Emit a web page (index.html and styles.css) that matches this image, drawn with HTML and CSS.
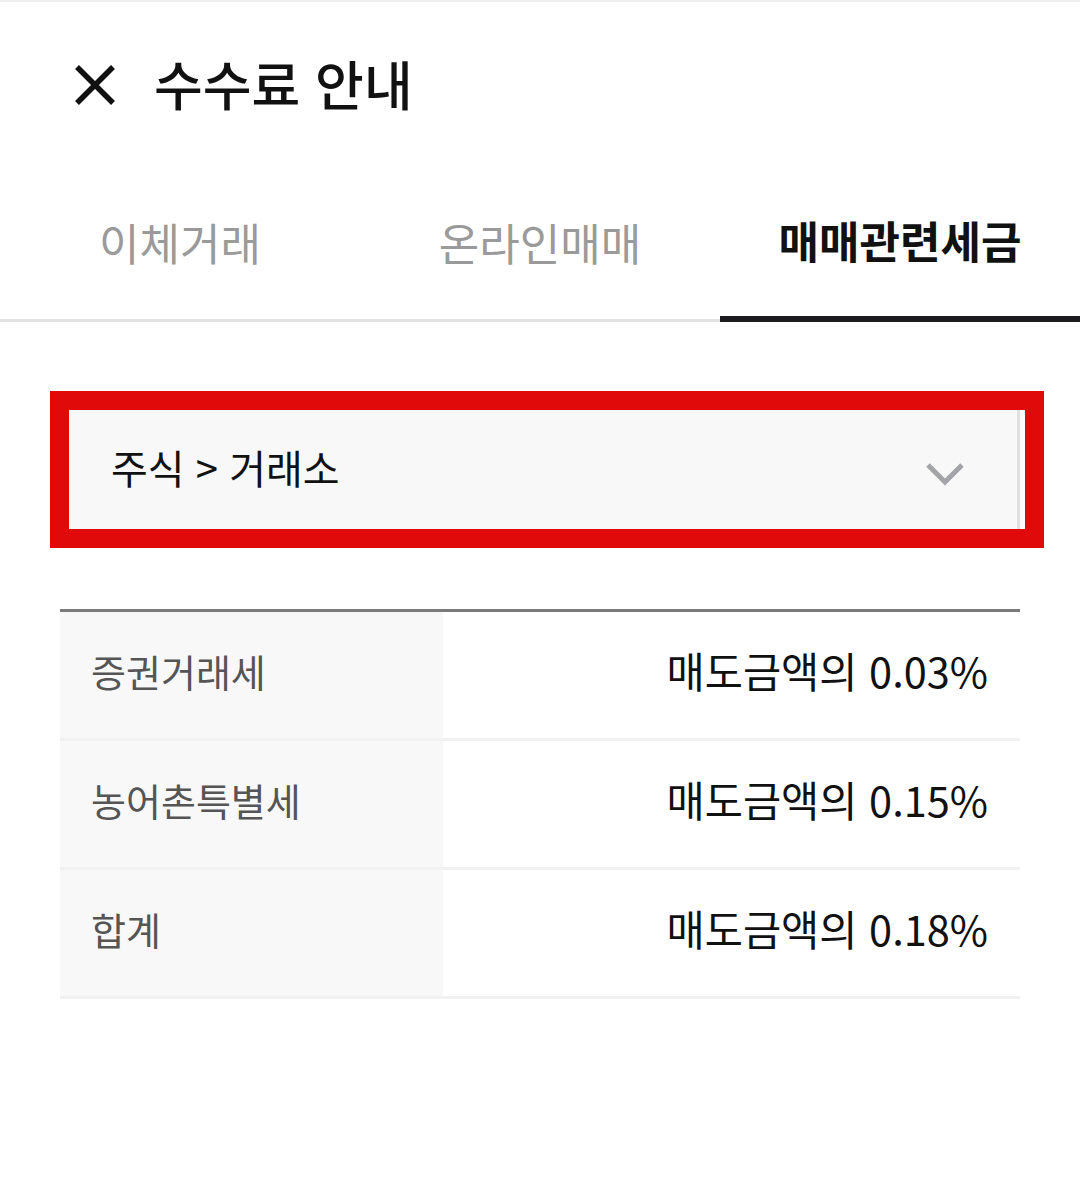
FILE: index.html
```html
<!DOCTYPE html>
<html lang="ko">
<head>
    <meta charset="UTF-8">
    <title>수수료 안내</title>
    <link rel="stylesheet" href="styles.css">
</head>
<body>

<div id="header">
    <svg class="closeIcon" width="42" height="42" viewBox="0 0 42 42">
        <path d="M3 3 L39 39 M39 3 L3 39" stroke="#111" stroke-width="5.5" fill="none"/>
    </svg>
    <h1 class="title">수수료 안내</h1>
</div> <!-- end header -->

<div id="tabs">
    <div class="tab">이체거래</div>
    <div class="tab">온라인매매</div>
    <div class="tab active">매매관련세금</div>
</div> <!-- end tabs -->

<div id="selectWrap">
    <div class="selectBox">
        <span class="selectText">주식 &gt; 거래소</span>
        <svg class="chevron" width="40" height="24" viewBox="0 0 40 24">
            <path d="M3 3 L20 20 L37 3" stroke="#a2a4a7" stroke-width="5" fill="none"/>
        </svg>
    </div>
</div> <!-- end selectWrap -->

<div id="taxTable">
    <div class="row">
        <div class="label">증권거래세</div>
        <div class="value">매도금액의 0.03%</div>
    </div>
    <div class="row">
        <div class="label">농어촌특별세</div>
        <div class="value">매도금액의 0.15%</div>
    </div>
    <div class="row">
        <div class="label">합계</div>
        <div class="value">매도금액의 0.18%</div>
    </div>
</div> <!-- end taxTable -->

</body>
</html>
```

FILE: styles.css
```css
body {
    margin: 0;
    background-color: #fff;
    font-family: "Noto Sans CJK KR", "Noto Sans", sans-serif;
    color: #111;
}

#header {
    display: flex;
    align-items: center;
    height: 166px;
    border-top: 2px solid #f0f0f0;
    padding-left: 74px;
}

.closeIcon {
    display: block;
}

.title {
    margin: 0 0 4px 38px;
    font-size: 53px;
    font-weight: 500;
    line-height: 1;
}

#tabs {
    display: grid;
    grid-template-columns: 1fr 1fr 1fr;
}

.tab {
    display: flex;
    align-items: center;
    justify-content: center;
    height: 154px;
    box-sizing: border-box;
    padding-bottom: 4px;
    border-bottom: 3px solid #e2e2e2;
    font-size: 44px;
    line-height: 1;
    color: #9a9a9a;
}

.tab.active {
    border-bottom: 6px solid #1c1c1e;
    color: #111;
    font-weight: 700;
}

#selectWrap {
    margin: 69px 36px 0 50px;
    border: 19px solid #e00a0a;
    background-color: #fbfbfb;
}

.selectBox {
    display: flex;
    align-items: center;
    justify-content: space-between;
    height: 119px;
    margin-right: 5px;
    padding: 0 52px 0 42px;
    background-color: #f8f8f8;
    border-right: 3px solid #e0e0e0;
}

.selectText {
    margin-bottom: 6px;
    font-size: 40px;
    line-height: 1;
    color: #111;
}

.chevron {
    display: block;
    margin-top: 8px;
}

#taxTable {
    width: 960px;
    margin: 61px 0 0 60px;
    border-top: 3px solid #7a7a7a;
}

.row {
    display: flex;
    height: 129px;
    box-sizing: border-box;
    border-bottom: 3px solid #f1f1f1;
}

.label {
    display: flex;
    align-items: center;
    width: 383px;
    box-sizing: border-box;
    padding: 0 0 9px 31px;
    background-color: #f8f8f8;
    font-size: 38px;
    line-height: 1;
    color: #555;
}

.value {
    flex: 1;
    display: flex;
    align-items: center;
    justify-content: flex-end;
    padding: 0 32px 9px 0;
    font-size: 41.5px;
    line-height: 1;
    color: #111;
}
```
